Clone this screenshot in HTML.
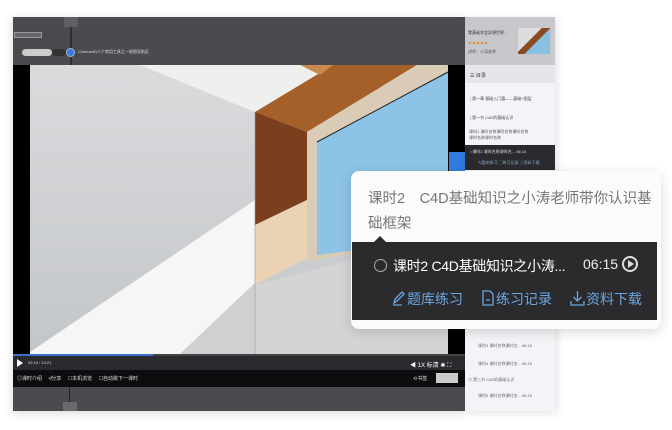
<!DOCTYPE html>
<html><head><meta charset="utf-8"><style>
*{margin:0;padding:0;box-sizing:border-box}
body{width:672px;height:430px;background:#fff;position:relative;overflow:hidden;font-family:"Liberation Sans","Noto Sans CJK SC",sans-serif}
.a{position:absolute}
.t{font-size:4px;color:#ddd;white-space:nowrap}
</style></head><body>
<div class="a" style="left:13px;top:17px;width:452px;height:394px;background:#4b4b4f;box-shadow:0 2px 10px rgba(0,0,0,.15)"></div>
<div class="a" style="left:64px;top:17px;width:14px;height:10px;background:#606064"></div>
<div class="a" style="left:70px;top:27px;width:2px;height:38px;background:#2f2f33"></div>
<div class="a" style="left:14px;top:32px;width:28px;height:6px;background:#66666a;border:1px solid #999"></div>
<div class="a" style="left:22px;top:49px;width:30px;height:7px;background:#ccc;border-radius:4px"></div>
<div class="a" style="left:52px;top:49px;width:14px;height:7px;background:#333;border-radius:3px"></div>
<div class="a" style="left:66px;top:48px;width:9px;height:9px;background:#3a7ae0;border-radius:50%;border:1px solid #9bc"></div>
<div class="a t" style="left:78px;top:49px">Cinema4D八个常用工具之一视图导航区</div>
<div class="a" style="left:13px;top:65px;width:452px;height:290px;background:#000"></div>
<svg class="a" style="left:30px;top:65px;width:418px;height:289px" width="418" height="289" viewBox="0 0 418 289">
<defs>
<linearGradient id="w" x1="0" y1="0" x2="0" y2="1"><stop offset="0" stop-color="#dadbdd"/><stop offset="1" stop-color="#c3c6c9"/></linearGradient>
</defs>
<g transform="translate(-30,-65)">
<rect x="30" y="65" width="418" height="289" fill="url(#w)"/>
<polygon points="140,65 448,65 448,72 255,112" fill="#efefee"/>
<polygon points="30,352 255,200 255,283 180,354 30,354" fill="#f6f6f5"/>
<polygon points="180,354 255,283 255,354" fill="#cfd0d1"/>
<polygon points="255,285 448,235 448,354 255,354" fill="#d4d4d4"/>
<polygon points="255,112 333,65 417,65 307,132" fill="#a5602a"/>
<polygon points="300,65 333,65 320,75" fill="#c98a4e"/>
<polygon points="255,112 307,132 307,200 255,225" fill="#7a3f1c"/>
<polygon points="255,225 307,200 307,258 255,285" fill="#ead2b2"/>
<polygon points="307,132 417,65 448,65 448,235 307,262" fill="#d9cbb5"/>
<polygon points="317,142 448,72 448,238 317,255" fill="#8cc3e6"/>
<line x1="317" y1="142" x2="448" y2="72" stroke="#222" stroke-width="1"/>
<line x1="255" y1="112" x2="255" y2="354" stroke="#999" stroke-width=".6"/>
</g>
</svg>
<div class="a" style="left:449px;top:152px;width:16px;height:22px;background:#2f7de1"></div>
<div class="a" style="left:13px;top:354px;width:452px;height:2px;background:#444"></div>
<div class="a" style="left:13px;top:354px;width:140px;height:2px;background:#3a6fd0"></div>
<div class="a" style="left:13px;top:356px;width:452px;height:14px;background:#2b2b2f"></div>
<div class="a" style="left:17px;top:359px;width:0;height:0;border-left:6px solid #fff;border-top:4px solid transparent;border-bottom:4px solid transparent"></div>
<div class="a t" style="left:28px;top:360px">02:15 / 14:21</div>
<div class="a t" style="left:410px;top:360px;font-size:6px;color:#fff">◀ 1X 标清 ✱ ⛶</div>
<div class="a" style="left:13px;top:370px;width:452px;height:17px;background:#0d0d0f"></div>
<div class="a t" style="left:17px;top:375px;font-size:5px">◎课时介绍 　≮分享 　☐本机浏览 　☐自动跳下一课时</div>
<div class="a t" style="left:413px;top:375px;font-size:5px">⟲书签</div>
<div class="a" style="left:436px;top:373px;width:22px;height:10px;background:#ccc"></div>
<div class="a" style="left:69px;top:387px;width:1px;height:16px;background:#222"></div>
<div class="a" style="left:63px;top:402px;width:14px;height:9px;background:#6a6a6e"></div>
<div class="a" style="left:465px;top:17px;width:90px;height:394px;background:#f3f4f7;box-shadow:2px 2px 8px rgba(0,0,0,.12)"></div>
<div class="a" style="left:465px;top:17px;width:90px;height:48px;background:#c7c8cc"></div>
<div class="a t" style="left:468px;top:30px;color:#333">零基础学会异想世界...</div>
<div class="a t" style="left:468px;top:40px;color:#e08a20">★★★★★</div>
<div class="a t" style="left:468px;top:49px;color:#555">讲师：小涛老师</div>
<div class="a" style="left:518px;top:28px;width:32px;height:26px;background:linear-gradient(135deg,#ddd 40%,#8a4b22 42%,#8a4b22 55%,#89c0e2 57%)"></div>
<div class="a" style="left:465px;top:65px;width:90px;height:18px;background:#e4e6ec"></div>
<div class="a t" style="left:470px;top:72px;color:#444;font-size:5px">☰ 目录</div>
<div class="a t" style="left:470px;top:96px;color:#444">¦ 第一章 基础入门篇——基础+图层</div>
<div class="a t" style="left:470px;top:115px;color:#444">¦ 第一节 C4D的基础认识</div>
<div class="a t" style="left:469px;top:129px;color:#555">课时1 课时名称课时名称课时名称<br>课时名称课时名称</div>
<div class="a" style="left:465px;top:145px;width:90px;height:25px;background:#2b2b2f"></div>
<div class="a t" style="left:470px;top:149px">○课时2 课时名称课时名... 06:15</div>
<div class="a t" style="left:478px;top:160px;color:#8ab">✎题库练习 ▢练习记录 ⇩资料下载</div>
<div class="a t" style="left:478px;top:343px;color:#666">课时3 课时名称课时名... 06:15</div>
<div class="a t" style="left:478px;top:361px;color:#666">课时4 课时名称课时名... 06:15</div>
<div class="a t" style="left:468px;top:377px;color:#666">⊙ 第三节 C4D的基础认识</div>
<div class="a t" style="left:478px;top:393px;color:#666">课时5 课时名称课时名... 06:15</div>
<div class="a" style="left:351px;top:171px;width:310px;height:158px;background:#fbfbfc;border-radius:8px;box-shadow:0 3px 12px rgba(0,0,0,.15)"></div>
<div class="a" style="left:368px;top:187px;font-size:14.5px;color:#777;line-height:25px;white-space:nowrap">课时2　C4D基础知识之小涛老师带你认识基<br>础框架</div>
<div class="a" style="left:352px;top:242px;width:305px;height:78px;background:#2b2b2e"></div>
<div class="a" style="left:373px;top:236px;width:0;height:0;border-left:7px solid transparent;border-right:7px solid transparent;border-bottom:7px solid #2b2b2e"></div>
<div class="a" style="left:374px;top:259px;width:13px;height:13px;border:1.5px solid #aaa;border-radius:50%"></div>
<div class="a" style="left:393px;top:256px;font-size:14px;color:#fff;white-space:nowrap;letter-spacing:-0.3px">课时2 C4D基础知识之小涛...</div>
<div class="a" style="left:583px;top:256px;font-size:14px;color:#eee">06:15</div>
<div class="a" style="left:622px;top:256px;width:16px;height:16px;border:2px solid #ddd;border-radius:50%"></div>
<div class="a" style="left:628px;top:260px;width:0;height:0;border-left:6px solid #ddd;border-top:4px solid transparent;border-bottom:4px solid transparent"></div>
<svg class="a" style="left:392px;top:290px" width="14" height="16" viewBox="0 0 14 16" fill="none" stroke="#6aa6e2" stroke-width="1.3"><path d="M2 13 L3 9 L10 2 L12 4 L5 11 Z M1 15 H10"/></svg>
<div class="a" style="left:407px;top:289px;font-size:14px;color:#6aa6e2;white-space:nowrap">题库练习</div>
<svg class="a" style="left:481px;top:290px" width="14" height="16" viewBox="0 0 14 16" fill="none" stroke="#6aa6e2" stroke-width="1.3"><path d="M2 1 H9 L12 4 V15 H2 Z M5 10 H9"/></svg>
<div class="a" style="left:496px;top:289px;font-size:14px;color:#6aa6e2;white-space:nowrap">练习记录</div>
<svg class="a" style="left:570px;top:290px" width="15" height="16" viewBox="0 0 15 16" fill="none" stroke="#6aa6e2" stroke-width="1.3"><path d="M7.5 1 V11 M3.5 7 L7.5 11 L11.5 7 M1 11 V15 H14 V11"/></svg>
<div class="a" style="left:586px;top:289px;font-size:14px;color:#6aa6e2;white-space:nowrap">资料下载</div>
</body></html>
